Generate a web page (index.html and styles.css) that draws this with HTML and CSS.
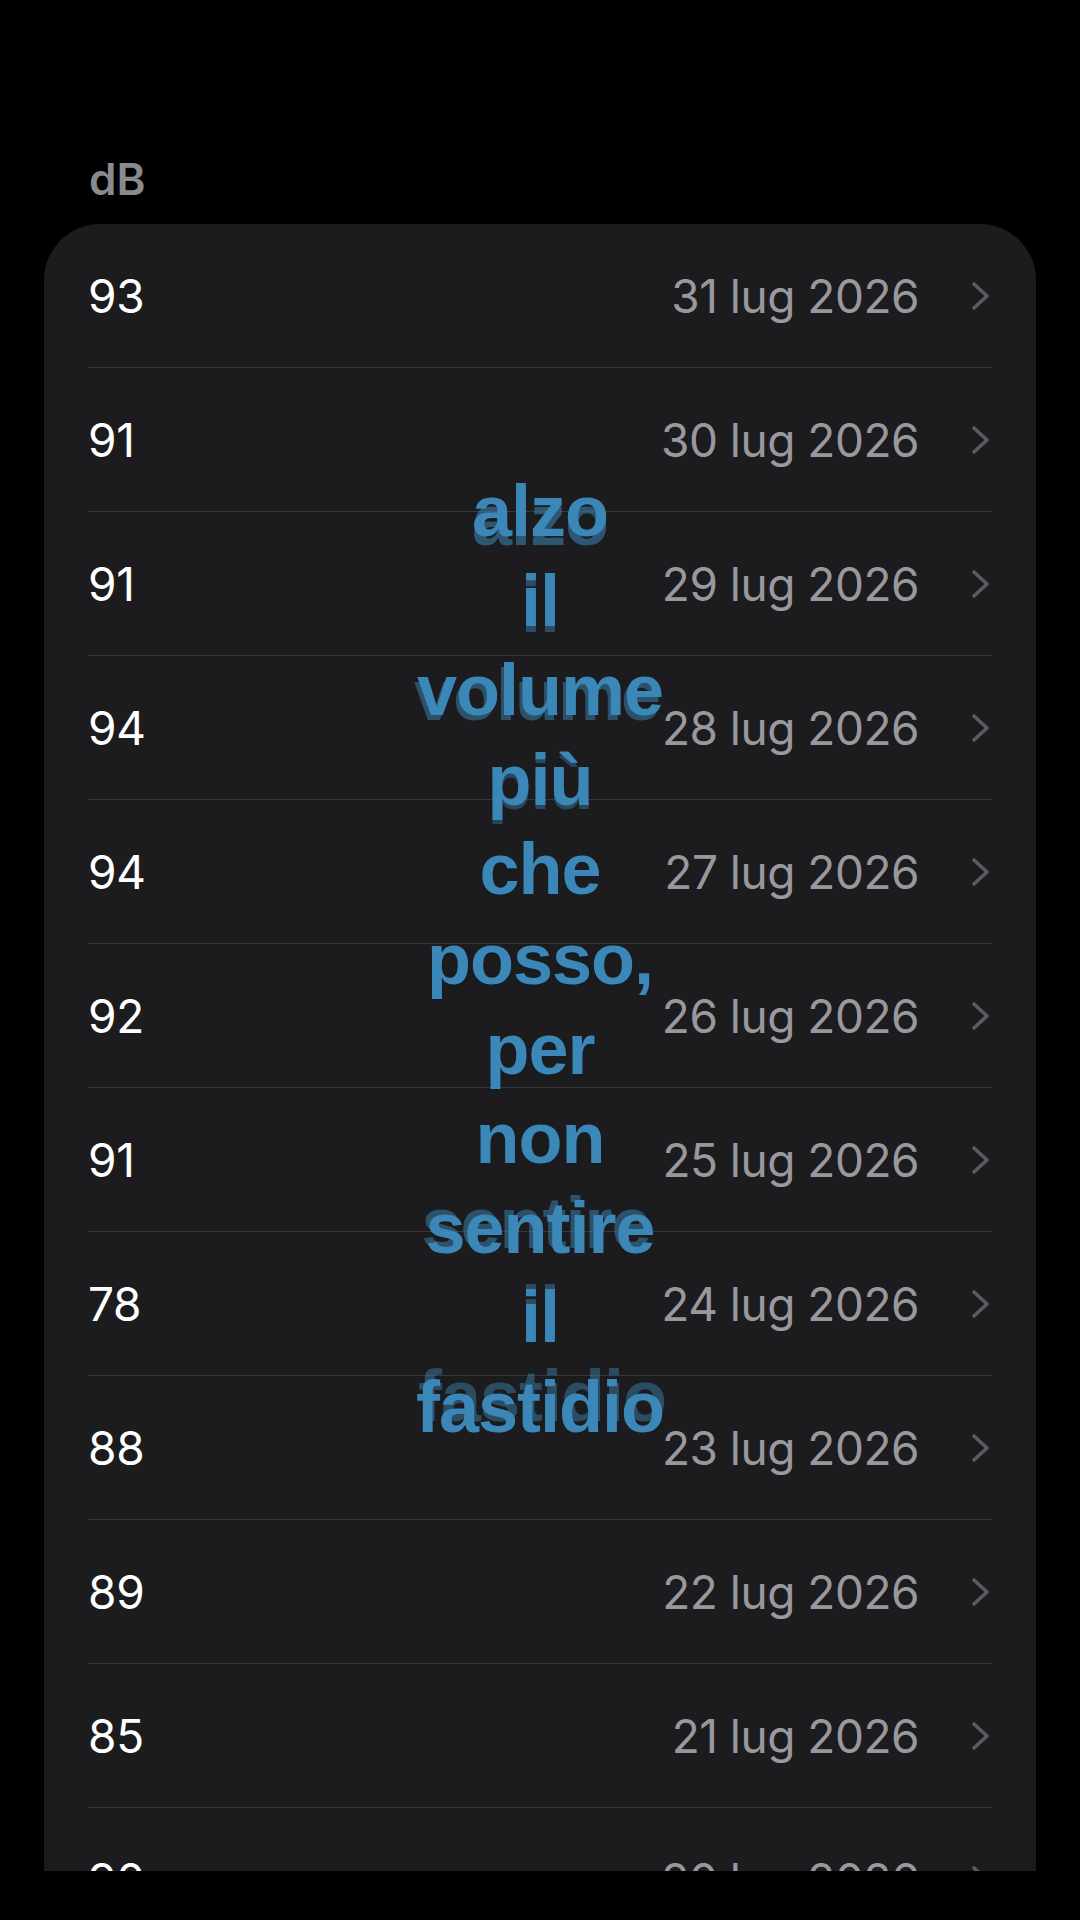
FILE: index.html
```html
<!DOCTYPE html>
<html lang="it">
<head>
<meta charset="utf-8">
<title>dB</title>
<link rel="stylesheet" href="styles.css">
</head>
<body>
<div class="screen">
  <div class="section-title">dB</div>
  <div class="card">
    <ul class="list">
      <li class="row"><span class="value">93</span><span class="date">31 lug 2026</span><svg class="chev" viewBox="0 0 22 30"><polyline points="4,3 17,15 4,27"/></svg></li>
      <li class="row"><span class="value">91</span><span class="date">30 lug 2026</span><svg class="chev" viewBox="0 0 22 30"><polyline points="4,3 17,15 4,27"/></svg></li>
      <li class="row"><span class="value">91</span><span class="date">29 lug 2026</span><svg class="chev" viewBox="0 0 22 30"><polyline points="4,3 17,15 4,27"/></svg></li>
      <li class="row"><span class="value">94</span><span class="date">28 lug 2026</span><svg class="chev" viewBox="0 0 22 30"><polyline points="4,3 17,15 4,27"/></svg></li>
      <li class="row"><span class="value">94</span><span class="date">27 lug 2026</span><svg class="chev" viewBox="0 0 22 30"><polyline points="4,3 17,15 4,27"/></svg></li>
      <li class="row"><span class="value">92</span><span class="date">26 lug 2026</span><svg class="chev" viewBox="0 0 22 30"><polyline points="4,3 17,15 4,27"/></svg></li>
      <li class="row"><span class="value">91</span><span class="date">25 lug 2026</span><svg class="chev" viewBox="0 0 22 30"><polyline points="4,3 17,15 4,27"/></svg></li>
      <li class="row"><span class="value">78</span><span class="date">24 lug 2026</span><svg class="chev" viewBox="0 0 22 30"><polyline points="4,3 17,15 4,27"/></svg></li>
      <li class="row"><span class="value">88</span><span class="date">23 lug 2026</span><svg class="chev" viewBox="0 0 22 30"><polyline points="4,3 17,15 4,27"/></svg></li>
      <li class="row"><span class="value">89</span><span class="date">22 lug 2026</span><svg class="chev" viewBox="0 0 22 30"><polyline points="4,3 17,15 4,27"/></svg></li>
      <li class="row"><span class="value">85</span><span class="date">21 lug 2026</span><svg class="chev" viewBox="0 0 22 30"><polyline points="4,3 17,15 4,27"/></svg></li>
      <li class="row"><span class="value">90</span><span class="date">20 lug 2026</span><svg class="chev" viewBox="0 0 22 30"><polyline points="4,3 17,15 4,27"/></svg></li>
    </ul>
  </div>
</div>
<div class="caption">
  <span class="w w1">alzo</span>
  <span class="w w2">il</span>
  <span class="w w3">volume</span>
  <span class="w w4">più</span>
  <span class="w w5">che</span>
  <span class="w w6">posso,</span>
  <span class="w w7">per</span>
  <span class="w w8">non</span>
  <span class="w w9">sentire</span>
  <span class="w w10">il</span>
  <span class="w w11">fastidio</span>
</div>
</body>
</html>
```

FILE: styles.css
```css
html, body {
  margin: 0;
  padding: 0;
  background: #000;
}
body {
  width: 1080px;
  height: 1920px;
  position: relative;
  overflow: hidden;
  font-family: Inter, "Noto Sans", "Liberation Sans", sans-serif;
}
.screen {
  height: 1871px;
  overflow: hidden;
  padding-top: 150px;
  box-sizing: border-box;
}
.section-title {
  padding-left: 89px;
  height: 58px;
  line-height: 58px;
  font-size: 44px;
  font-weight: 600;
  color: #8a8a8e;
  margin-bottom: 16px;
}
.card {
  margin: 0 44px;
  background: #1c1c1e;
  border-radius: 56px 56px 0 0;
  min-height: 2000px;
}
.list {
  list-style: none;
  margin: 0;
  padding: 0 44px;
}
.row {
  display: flex;
  align-items: center;
  height: 143px;
  border-bottom: 1px solid #38383a;
  box-sizing: content-box;
}
.value {
  flex: 1;
  font-size: 46px;
  color: #ffffff;
  letter-spacing: -0.3px;
}
.date {
  font-size: 46px;
  color: #98989e;
  letter-spacing: -0.5px;
}
.chev {
  width: 22px;
  height: 30px;
  margin-left: 51px;
  fill: none;
  stroke: #5c5c60;
  stroke-width: 3.6;
  stroke-linecap: round;
  stroke-linejoin: round;
}
.caption {
  position: absolute;
  left: 50%;
  top: 960px;
  transform: translate(-50%, -50%);
  width: 280px;
  display: flex;
  flex-direction: column;
  align-items: center;
  font-family: "Liberation Sans", Arial, sans-serif;
  font-weight: 700;
  font-size: 72px;
  line-height: 89.6px;
  color: #3b87b7;
  letter-spacing: -1px;
}
.w {
  text-shadow: 0 2px 2px rgba(10, 30, 45, 0.45);
}
.w1 { text-shadow: 0 9px 0 rgba(58, 125, 168, 0.6); }
.w2 { text-shadow: 0 6px 0 rgba(58, 125, 168, 0.5); }
.w3 { text-shadow: -3px 5px 0 rgba(58, 125, 168, 0.55); }
.w4 { text-shadow: 0 4px 0 rgba(58, 125, 168, 0.45); }
.w9 { text-shadow: -4px -5px 0 rgba(58, 125, 168, 0.55); }
.w10 { text-shadow: 0 -5px 0 rgba(58, 125, 168, 0.5); }
.w11 { text-shadow: 2px -11px 0 rgba(58, 125, 168, 0.5); }
```
